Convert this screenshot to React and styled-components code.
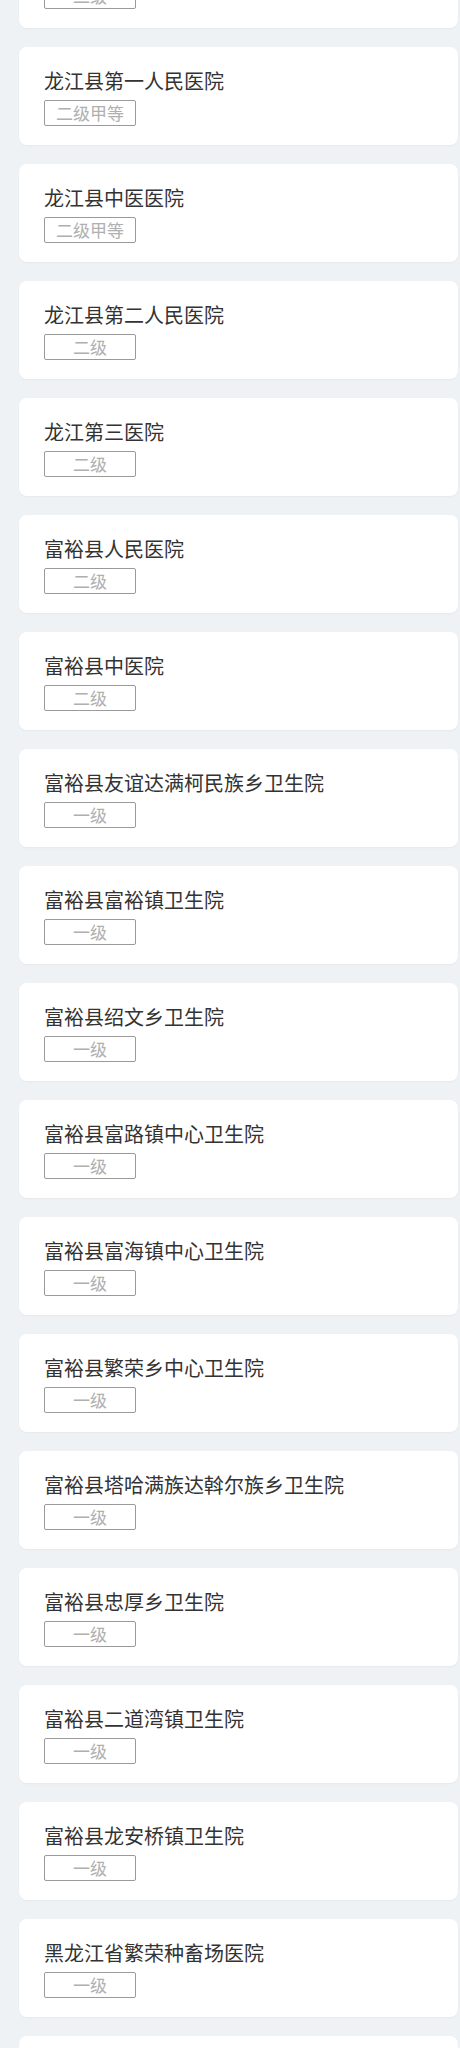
import React from "react";
import styled, { createGlobalStyle } from "styled-components";

const Global = createGlobalStyle`
  html, body { margin: 0; padding: 0; background: #eef2f5; }
  body { font-family: "Noto Sans CJK SC", "Noto Sans", sans-serif; }
`;

const List = styled.div`
  display: flex;
  flex-direction: column;
  gap: 19px;
  margin-top: -70px;
  padding: 0 2px 0 19px;
`;

const Card = styled.div`
  background: #ffffff;
  border-radius: 8px;
  height: 98px;
  box-sizing: border-box;
  padding: 20px 25px 19px;
  display: flex;
  flex-direction: column;
  gap: 5px;
  box-shadow: 0 1px 2px rgba(0, 0, 0, 0.04);
`;

const Title = styled.div`
  font-size: 20px;
  line-height: 28px;
  color: #333333;
  white-space: nowrap;
`;

const Badge = styled.div`
  width: 92px;
  height: 26px;
  box-sizing: border-box;
  border: 1px solid #9a9a9a;
  border-radius: 2px;
  color: #b0b0b0;
  font-size: 17px;
  line-height: 24px;
  text-align: center;
`;

const hospitals = [
  ["龙江县人民医院", "二级"],
  ["龙江县第一人民医院", "二级甲等"],
  ["龙江县中医医院", "二级甲等"],
  ["龙江县第二人民医院", "二级"],
  ["龙江第三医院", "二级"],
  ["富裕县人民医院", "二级"],
  ["富裕县中医院", "二级"],
  ["富裕县友谊达满柯民族乡卫生院", "一级"],
  ["富裕县富裕镇卫生院", "一级"],
  ["富裕县绍文乡卫生院", "一级"],
  ["富裕县富路镇中心卫生院", "一级"],
  ["富裕县富海镇中心卫生院", "一级"],
  ["富裕县繁荣乡中心卫生院", "一级"],
  ["富裕县塔哈满族达斡尔族乡卫生院", "一级"],
  ["富裕县忠厚乡卫生院", "一级"],
  ["富裕县二道湾镇卫生院", "一级"],
  ["富裕县龙安桥镇卫生院", "一级"],
  ["黑龙江省繁荣种畜场医院", "一级"],
  ["黑龙江省富裕牧场医院", "一级"],
];

export default function App() {
  return (
    <>
      <Global />
      <List>
        {hospitals.map(([name, level], i) => (
          <Card key={i}>
            <Title>{name}</Title>
            <Badge>{level}</Badge>
          </Card>
        ))}
      </List>
    </>
  );
}
